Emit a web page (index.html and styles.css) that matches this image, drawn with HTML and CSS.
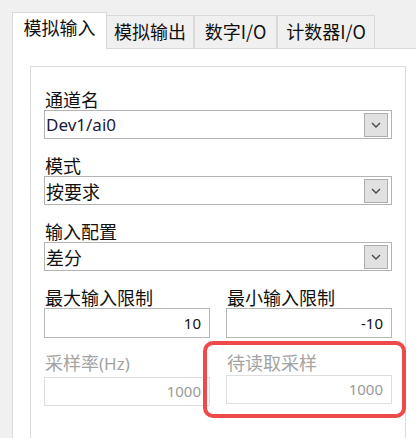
FILE: index.html
```html
<!DOCTYPE html>
<html lang="zh-CN">
<head>
<meta charset="utf-8">
<title>模拟输入</title>
<link rel="stylesheet" href="styles.css">
</head>
<body>
<div class="window">
  <div class="tabs">
    <div class="tab active">模拟输入</div>
    <div class="tab t1">模拟输出</div>
    <div class="tab t2">数字I/O</div>
    <div class="tab t3">计数器I/O</div>
  </div>
  <div class="page">
    <div class="group">
      <div class="field">
        <div class="label">通道名</div>
        <div class="combo"><span class="value latin">Dev1/ai0</span><span class="btn"><svg width="10" height="6" viewBox="0 0 10 6"><polyline points="1,1 5,5 9,1" fill="none" stroke="#4a4a4a" stroke-width="1.4"/></svg></span></div>
      </div>
      <div class="field">
        <div class="label">模式</div>
        <div class="combo"><span class="value">按要求</span><span class="btn"><svg width="10" height="6" viewBox="0 0 10 6"><polyline points="1,1 5,5 9,1" fill="none" stroke="#4a4a4a" stroke-width="1.4"/></svg></span></div>
      </div>
      <div class="field">
        <div class="label">输入配置</div>
        <div class="combo"><span class="value">差分</span><span class="btn"><svg width="10" height="6" viewBox="0 0 10 6"><polyline points="1,1 5,5 9,1" fill="none" stroke="#4a4a4a" stroke-width="1.4"/></svg></span></div>
      </div>
      <div class="row">
        <div class="field">
          <div class="label">最大输入限制</div>
          <div class="input">10</div>
        </div>
        <div class="field">
          <div class="label">最小输入限制</div>
          <div class="input">-10</div>
        </div>
      </div>
      <div class="row disabled">
        <div class="field">
          <div class="label">采样率<span class="latin-s">(Hz)</span></div>
          <div class="input">1000</div>
        </div>
        <div class="field">
          <div class="label">待读取采样</div>
          <div class="input">1000</div>
        </div>
      </div>
    </div>
  </div>
  <div class="highlight"></div>
</div>
</body>
</html>
```
FILE: styles.css
```css
html, body {
  margin: 0;
  height: 100%;
}
body {
  background: #f0f0f0;
  font-family: "Noto Sans CJK SC", "Noto Sans", sans-serif;
  font-size: 18px;
  color: #111;
  overflow: hidden;
}
.window {
  position: relative;
  height: 100%;
  padding: 12px 0 0 12px;
  box-sizing: border-box;
}
.tabs {
  display: flex;
  align-items: flex-end;
  height: 36px;
  position: relative;
  z-index: 1;
}
.tab {
  box-sizing: border-box;
  height: 33px;
  line-height: 22px;
  padding-top: 4px;
  text-align: center;
  background: #f0f0f0;
  border: 1px solid #d9d9d9;
  border-bottom: none;
  white-space: nowrap;
}
.tab.active {
  width: 95px;
  height: 37px;
  margin-bottom: -1px;
  padding-top: 3px;
  background: #fff;
}
.tab.t1 { width: 87px; border-left: none; }
.tab.t2 { width: 83px; }
.tab.t3 { width: 98px; }
.page {
  background: #fff;
  border-top: 1px solid #d9d9d9;
  border-left: 1px solid #d9d9d9;
  padding: 17px 0 0 17px;
  height: 390px;
  box-sizing: border-box;
}
.group {
  width: 376px;
  box-sizing: border-box;
  border: 1px solid #dcdcdc;
  border-bottom: none;
  padding: 21px 13px 0 13px;
  height: 372px;
}
.field + .field,
.row {
  margin-top: 15px;
}
.row .field + .field { margin-top: 0; }
.label {
  line-height: 22px;
  padding-left: 1px;
  white-space: nowrap;
}
.latin-s {
  font-family: "Noto Sans", sans-serif;
  font-size: 17px;
}
.combo {
  height: 29px;
  box-sizing: border-box;
  border: 1px solid #b3b3b3;
  display: flex;
  align-items: center;
  background: #fff;
}
.value {
  padding-left: 1px;
  line-height: 22px;
}
.value.latin {
  font-family: "Noto Sans", sans-serif;
  font-size: 17px;
  color: #1a1a3a;
}
.btn {
  margin-left: auto;
  margin-right: 3px;
  width: 24px;
  height: 24px;
  box-sizing: border-box;
  border: 1px solid #adadad;
  background: #e1e1e1;
  display: flex;
  align-items: center;
  justify-content: center;
}
.row {
  display: grid;
  grid-template-columns: 166px 166px;
  column-gap: 16px;
}
.row.disabled { margin-top: 13px; }
.input {
  height: 30px;
  box-sizing: border-box;
  border: 1px solid #b8b8b8;
  text-align: right;
  padding-right: 8px;
  font-family: "Noto Sans", sans-serif;
  font-size: 15px;
  line-height: 28px;
  color: #111;
  background: #fff;
}
.disabled .label { color: #a3a3a3; margin-bottom: 2px; }
.disabled .input {
  border-color: #dedede;
  color: #9a9a9a;
  height: 29px;
  line-height: 27px;
}
.highlight {
  position: absolute;
  left: 203px;
  top: 341px;
  width: 203px;
  height: 77px;
  box-sizing: border-box;
  border: 4px solid #ef4a4a;
  border-radius: 10px;
}
```
